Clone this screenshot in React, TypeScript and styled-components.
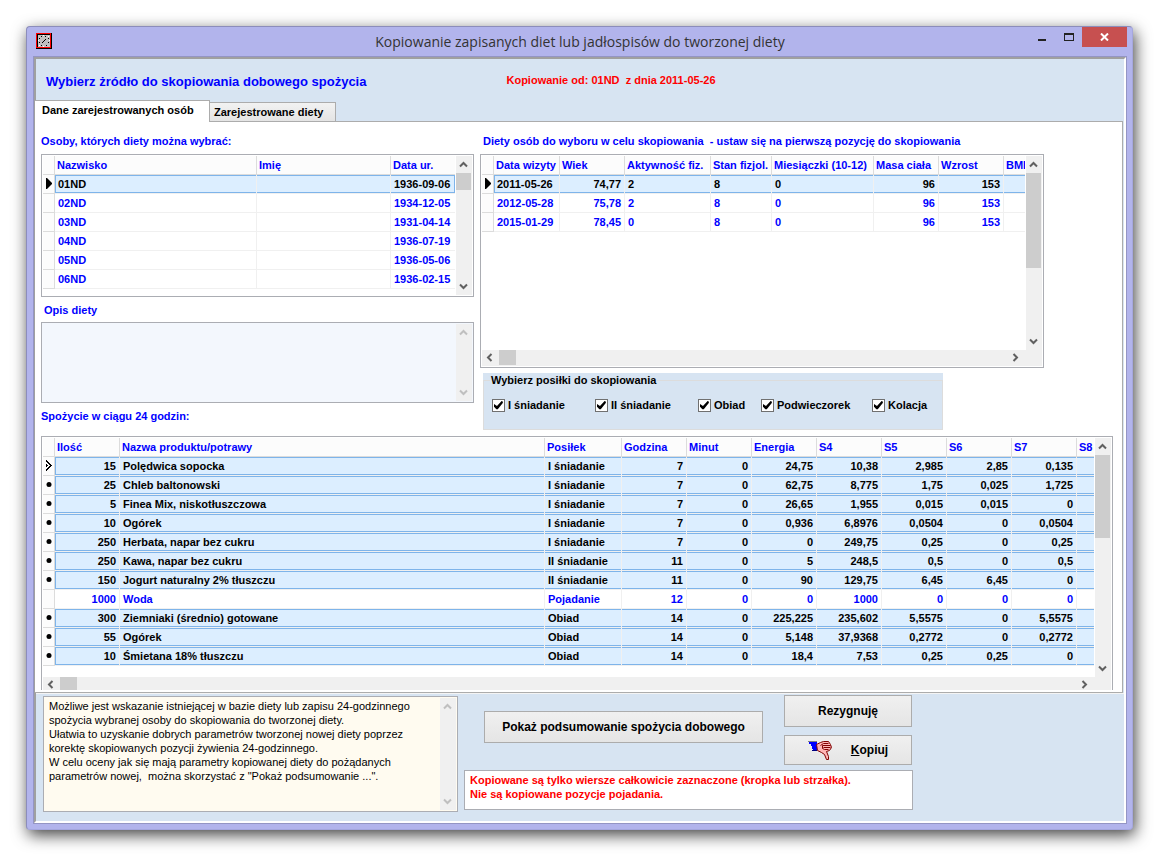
import React from 'react';
import styled, { createGlobalStyle, css } from 'styled-components';

const C = {
  blue: '#0000ff',
  red: '#ff0000',
  panel: '#d7e4f2',
  chrome: '#b2b4ec',
  line: '#acacac',
  box: '#abadb3',
  cellLine: '#f0f0f0',
  headLine: '#dcdcdc',
  sel: '#dceeff',
  selEdge: '#7eb4ea',
};

const Global = createGlobalStyle`
  *, *::before, *::after { box-sizing: border-box; }
  body { margin: 0; background: #fff; }
  body, button, input, textarea, table {
    font-family: "Liberation Sans", Arial, sans-serif;
    font-size: 11px;
    line-height: 14px;
    font-weight: bold;
    color: #000;
  }
`;

const Page = styled.div`
  padding: 26px 27px 27px 26px;
`;

const Dialog = styled.main`
  background: ${C.chrome};
  border: 1px solid #8c8dbb;
  border-right-color: #a5a7de;
  border-bottom-color: #a5a7de;
  border-radius: 4px;
  padding: 0 5px 5px 6px;
  box-shadow: 2px 5px 16px rgba(0, 0, 0, 0.75);
`;

const TitleBar = styled.header`
  display: grid;
  grid-template-columns: 99px 1fr 99px;
  height: 29px;
`;

const TitleIcon = styled.svg`
  display: block;
  margin: 6px 3px;
`;

const Title = styled.h1`
  margin: 0;
  padding-top: 5px;
  text-align: center;
  white-space: nowrap;
  font: 14px/20px "Open Sans", "Segoe UI", sans-serif;
  color: #333;
`;

const Controls = styled.div`
  display: flex;
  justify-content: flex-end;
  align-items: flex-start;
`;

const ControlButton = styled.button<{ $close?: boolean }>`
  flex: none;
  width: ${(p) => (p.$close ? 45 : 27)}px;
  height: 20px;
  padding: 0;
  border: 0;
  background: ${(p) => (p.$close ? '#c75050' : 'transparent')};
  svg { display: block; margin: auto; }
`;

const Client = styled.div`
  border: 1px solid #9495c4;
  background: ${C.panel};
`;

const Inset = styled.div`
  border: 2px solid;
  border-color: #a0a0a0 #fff #fff #a0a0a0;
`;

const Banner = styled.div`
  display: flex;
  align-items: center;
  gap: 140px;
  height: 41px;
  padding: 2px 10px 0;
  white-space: nowrap;
`;

const Heading = styled.h2`
  margin: 0;
  padding-top: 2px;
  font-size: 13px;
  line-height: 20px;
  color: ${C.blue};
`;

const SourceNote = styled.p`
  margin: 0;
  padding-bottom: 2px;
  color: ${C.red};
`;

const TabList = styled.div`
  display: flex;
  align-items: flex-end;
  height: 22px;
  margin: 0 1px 0 -1px;
  box-shadow: inset 0 -1px ${C.line};
`;

const Tab = styled.button<{ $active?: boolean }>`
  border: 1px solid ${C.line};
  text-align: left;
  white-space: nowrap;
  ${(p) =>
    p.$active
      ? css`
          width: 175px;
          height: 22px;
          padding: 0 0 3px 7px;
          background: #fff;
          border-left: 0;
          border-bottom: 0;
        `
      : css`
          width: 127px;
          height: 20px;
          padding: 0 0 0 4px;
          margin-left: -1px;
          background: linear-gradient(#f2f2f2, #e4e4e4);
        `}
`;

const TabPage = styled.section`
  margin: 0 1px 0 -1px;
  padding: 12px 9px 2px 6px;
  background: #fff;
  border-right: 1px solid ${C.line};
  border-bottom: 1px solid ${C.line};
`;

const Upper = styled.div`
  display: flex;
  align-items: flex-start;
  gap: 6px;
`;

const LeftColumn = styled.div`
  flex: 0 0 433px;
  display: grid;
  padding-bottom: 13px;
`;

const RightColumn = styled.div`
  flex: 0 1 564px;
  min-width: 0;
`;

const Caption = styled.h3<{ $inset?: boolean }>`
  margin: 0 0 6px;
  padding-left: ${(p) => (p.$inset ? 3 : 0)}px;
  font-size: 11px;
  line-height: 14px;
  color: ${C.blue};
  white-space: pre;
`;

const FieldCaption = styled.label`
  margin: 6px 0 5px;
  padding-left: 3px;
  color: ${C.blue};
`;

const EndCaption = styled(Caption)`
  margin: 6px 0 0;
`;

const Frame = styled.div<{ $height: number; $open?: boolean }>`
  display: grid;
  grid-template-columns: minmax(0, 1fr) 16px;
  grid-template-rows: minmax(0, 1fr) auto;
  column-gap: 1px;
  height: ${(p) => p.$height}px;
  padding: 1px;
  border: 1px solid ${C.box};
  background: #fff;
  ${(p) => p.$open && 'border-bottom: 0; padding-bottom: 0;'}
`;

const MemoFrame = styled(Frame)<{ $tint: string }>`
  background: ${(p) => p.$tint};
`;

const Clip = styled.div`
  overflow: hidden;
`;

const Bar = styled.div<{ $across?: boolean; $short?: boolean }>`
  display: flex;
  flex-direction: ${(p) => (p.$across ? 'row' : 'column')};
  background: #f0f0f0;
  ${(p) => p.$across && `grid-column: 1 / -1; height: ${p.$short ? 13 : 16}px; padding-right: 17px; overflow: hidden;`}
`;

const BarButton = styled.button<{ $across: boolean }>`
  display: grid;
  place-items: center;
  flex: none;
  width: 15px;
  height: ${(p) => (p.$across ? 15 : 17)}px;
  margin-right: ${(p) => (p.$across ? 2 : 0)}px;
  padding: 0;
  border: 0;
  background: transparent;
`;

const BarTrack = styled.div`
  flex: 1;
`;

const Thumb = styled.div<{ $across?: boolean; $length: number }>`
  background: #cdcdcd;
  width: ${(p) => (p.$across ? p.$length : 15)}px;
  height: ${(p) => (p.$across ? 15 : p.$length)}px;
`;

const Table = styled.table`
  width: 100%;
  table-layout: fixed;
  border-collapse: separate;
  border-spacing: 0;
`;

const HeadCell = styled.th`
  height: 19px;
  padding: 0 0 0 2px;
  overflow: hidden;
  text-align: left;
  white-space: nowrap;
  background: #fcfcfc;
  color: ${C.blue};
  border-right: 1px solid ${C.headLine};
  border-bottom: 1px solid ${C.headLine};
  &:last-child { border-right: 0; }
`;

const MarkCell = styled.td`
  height: 19px;
  padding: 0;
  background: #fcfcfc;
  border-right: 1px solid ${C.headLine};
  border-bottom: 1px solid ${C.headLine};
  svg { display: block; }
`;

const Cell = styled.td<{ $right?: boolean; $selected?: boolean; $first?: boolean; $closed?: boolean }>`
  height: 19px;
  padding: 0 3px;
  overflow: hidden;
  white-space: nowrap;
  text-align: ${(p) => (p.$right ? 'right' : 'left')};
  color: ${(p) => (p.$selected ? '#000' : C.blue)};
  border-right: 1px solid ${C.cellLine};
  border-bottom: 1px solid ${C.cellLine};
  &:last-child { border-right: 0; }
  ${(p) =>
    p.$selected &&
    css`
      background: ${C.sel};
      box-shadow: inset 0 1px ${C.selEdge}, inset 0 -1px ${C.selEdge}${p.$first ? `, inset 1px 0 ${C.selEdge}` : ''}${p.$closed ? `, inset -1px 0 ${C.selEdge}` : ''};
    `}
`;

const Memo = styled.textarea<{ $plain?: boolean }>`
  display: block;
  width: 100%;
  height: 100%;
  margin: 0;
  padding: ${(p) => (p.$plain ? 1 : 2)}px 4px;
  border: 0;
  outline: 0;
  resize: none;
  overflow: hidden;
  white-space: pre;
  background: transparent;
  font-weight: ${(p) => (p.$plain ? 'normal' : 'bold')};
`;

const MealPanel = styled.div`
  width: 460px;
  max-width: 100%;
  margin: 5px 0 0 3px;
  background: ${C.panel};
`;

const MealGroup = styled.fieldset`
  height: 57px;
  margin: 0;
  padding: 11px 8px 0;
  border: 1px solid #dcdcdc;
  legend { padding: 0 1px; margin-left: -2px; }
`;

const MealRow = styled.div`
  display: grid;
  grid-template-columns: 103px 103px 63px 111px auto;
`;

const Check = styled.label`
  display: flex;
  align-items: center;
  gap: 3px;
  white-space: nowrap;
`;

const CheckInput = styled.input`
  appearance: none;
  flex: none;
  width: 13px;
  height: 13px;
  margin: 0;
  border: 1px solid #707070;
  background: #fff;
  &:checked::after {
    content: '';
    display: block;
    width: 9px;
    height: 9px;
    margin: 1px;
    background: #000;
    clip-path: polygon(0 40%, 33% 62%, 90% 0, 100% 24%, 42% 96%, 26% 96%, 0 70%);
  }
`;

const Footer = styled.footer`
  display: flex;
  align-items: flex-start;
  height: 128px;
  padding: 2px 7px 0;
  border-top: 1px solid #f4f4f4;
`;

const InfoBox = styled.div`
  flex: 0 0 415px;
`;

const Actions = styled.div`
  flex: 0 0 449px;
  margin-left: 6px;
`;

const ActionRow = styled.div`
  display: flex;
  justify-content: space-between;
  padding: 0 1px 0 20px;
  margin-top: -1px;
`;

const ActionStack = styled.div`
  display: grid;
  gap: 8px;
`;

const PushButton = styled.button<{ $wide?: boolean; $low?: boolean }>`
  display: flex;
  align-items: center;
  justify-content: center;
  gap: 19px;
  width: ${(p) => (p.$wide ? 279 : 128)}px;
  height: ${(p) => (p.$low ? 30 : 32)}px;
  margin-top: ${(p) => (p.$wide ? 16 : 0)}px;
  padding: 0;
  border: 1px solid ${C.line};
  background: linear-gradient(#f0f0f0, #e5e5e5);
  font-size: 12px;
  white-space: nowrap;
`;

const WarningBox = styled.div`
  height: 40px;
  margin-top: 5px;
  padding: 0 1px;
  border: 1px solid ${C.box};
  background: #fff;
  textarea { color: ${C.red}; }
`;

type Dir = 'up' | 'down' | 'left' | 'right';
const turn: Record<Dir, number> = { up: 0, right: 90, down: 180, left: 270 };
const dirName: Record<Dir, string> = { up: 'W górę', right: 'W prawo', down: 'W dół', left: 'W lewo' };

const Arrow = ({ dir, dim }: { dir: Dir; dim?: boolean }) => (
  <BarButton type="button" $across={dir === 'left' || dir === 'right'} aria-label={dirName[dir]} disabled={dim}>
    <svg width="9" height="9" viewBox="0 0 9 9">
      <path d="M1 6.5 4.5 3 8 6.5" transform={`rotate(${turn[dir]} 4.5 4.5)`} fill="none" stroke={dim ? '#bfbfbf' : '#606060'} strokeWidth="2" />
    </svg>
  </BarButton>
);

const VBar = ({ thumb }: { thumb?: number }) => (
  <Bar>
    <Arrow dir="up" dim={!thumb} />
    <BarTrack>{thumb && <Thumb $length={thumb} />}</BarTrack>
    <Arrow dir="down" dim={!thumb} />
  </Bar>
);

const HBar = ({ short }: { short?: boolean }) => (
  <Bar $across $short={short}>
    <Arrow dir="left" />
    <BarTrack><Thumb $across $length={17} /></BarTrack>
    <Arrow dir="right" />
  </Bar>
);

type Mark = 'current' | 'multi' | 'dot' | 'none';
const MarkIcon = ({ mark }: { mark: Mark }) => (
  <svg width="10" height="12" viewBox="0 0 10 12">
    {mark === 'current' && <path d="M3 0h1l5 5v1l-5 5H3z" />}
    {mark === 'multi' && (
      <path
        d="M3 0h1v1h1v1h1v1h1v1h1v1h1v1H8v1H7v1H6v1H5v1H4v1H3V9h1V8h1V7h1V6h1V5H6V4H5V3H4V2H3zM3 4h1v1h1v1H4v1H3z"
        shapeRendering="crispEdges"
      />
    )}
    {mark === 'dot' && <circle cx="6" cy="5.500" r="2.500" />}
  </svg>
);

interface Column { title: string; width?: number; right?: boolean }
interface Row { mark: Mark; cells: string[] }

const DataGrid = ({ columns, rows, closed }: { columns: Column[]; rows: Row[]; closed?: boolean }) => (
  <Clip>
    <Table>
      <colgroup>
        <col style={{ width: 12 }} />
        {columns.map((c) => <col key={c.title} style={{ width: c.width }} />)}
      </colgroup>
      <thead>
        <tr>
          <HeadCell />
          {columns.map((c) => <HeadCell key={c.title} scope="col">{c.title}</HeadCell>)}
        </tr>
      </thead>
      <tbody>
        {rows.map((r, i) => (
          <tr key={i}>
            <MarkCell><MarkIcon mark={r.mark} /></MarkCell>
            {columns.map((c, j) => (
              <Cell
                key={c.title}
                $right={c.right}
                $selected={r.mark !== 'none'}
                $first={j === 0}
                $closed={closed && j === columns.length - 1}
              >
                {r.cells[j]}
              </Cell>
            ))}
          </tr>
        ))}
      </tbody>
    </Table>
  </Clip>
);

const personColumns: Column[] = [{ title: 'Nazwisko', width: 202 }, { title: 'Imię' }, { title: 'Data ur.', width: 64 }];
const personRows: Row[] = [
  ['01ND', '1936-09-06'], ['02ND', '1934-12-05'], ['03ND', '1931-04-14'],
  ['04ND', '1936-07-19'], ['05ND', '1936-05-06'], ['06ND', '1936-02-15'],
].map(([name, born], i) => ({ mark: i ? 'none' : 'current', cells: [name, '', born] }));

const visitColumns: Column[] = [
  { title: 'Data wizyty', width: 66 },
  { title: 'Wiek', width: 65, right: true },
  { title: 'Aktywność fiz.', width: 86 },
  { title: 'Stan fizjol.', width: 61 },
  { title: 'Miesiączki (10-12)', width: 102 },
  { title: 'Masa ciała', width: 65, right: true },
  { title: 'Wzrost', width: 65, right: true },
  { title: 'BMI' },
];
const visitRows: Row[] = [
  { mark: 'current', cells: ['2011-05-26', '74,77', '2', '8', '0', '96', '153', ''] },
  { mark: 'none', cells: ['2012-05-28', '75,78', '2', '8', '0', '96', '153', ''] },
  { mark: 'none', cells: ['2015-01-29', '78,45', '0', '8', '0', '96', '153', ''] },
];

const foodColumns: Column[] = [
  { title: 'Ilość', width: 65, right: true },
  { title: 'Nazwa produktu/potrawy' },
  { title: 'Posiłek', width: 77 },
  ...['Godzina', 'Minut', 'Energia', 'S4', 'S5', 'S6', 'S7'].map((title) => ({ title, width: 65, right: true })),
  { title: 'S8', width: 17 },
];
const foodRows: Row[] = [
  '15|Polędwica sopocka|I śniadanie|7|0|24,75|10,38|2,985|2,85|0,135',
  '25|Chleb baltonowski|I śniadanie|7|0|62,75|8,775|1,75|0,025|1,725',
  '5|Finea Mix, niskotłuszczowa|I śniadanie|7|0|26,65|1,955|0,015|0,015|0',
  '10|Ogórek|I śniadanie|7|0|0,936|6,8976|0,0504|0|0,0504',
  '250|Herbata, napar bez cukru|I śniadanie|7|0|0|249,75|0,25|0|0,25',
  '250|Kawa, napar bez cukru|II śniadanie|11|0|5|248,5|0,5|0|0,5',
  '150|Jogurt naturalny 2% tłuszczu|II śniadanie|11|0|90|129,75|6,45|6,45|0',
  '1000|Woda|Pojadanie|12|0|0|1000|0|0|0',
  '300|Ziemniaki (średnio) gotowane|Obiad|14|0|225,225|235,602|5,5575|0|5,5575',
  '55|Ogórek|Obiad|14|0|5,148|37,9368|0,2772|0|0,2772',
  '10|Śmietana 18% tłuszczu|Obiad|14|0|18,4|7,53|0,25|0,25|0',
].map((line, i) => ({ mark: i === 0 ? 'multi' : i === 7 ? 'none' : 'dot', cells: [...line.split('|'), ''] }));

const meals = ['I śniadanie', 'II śniadanie', 'Obiad', 'Podwieczorek', 'Kolacja'];

const infoText = `Możliwe jest wskazanie istniejącej w bazie diety lub zapisu 24-godzinnego
spożycia wybranej osoby do skopiowania do tworzonej diety.
Ułatwia to uzyskanie dobrych parametrów tworzonej nowej diety poprzez
korektę skopiowanych pozycji żywienia 24-godzinnego.
W celu oceny jak się mają parametry kopiowanej diety do pożądanych
parametrów nowej,  można skorzystać z "Pokaż podsumowanie ...".`;

const warningText = `Kopiowane są tylko wiersze całkowicie zaznaczone (kropka lub strzałka).
Nie są kopiowane pozycje pojadania.`;

const AppIcon = () => (
  <TitleIcon width="16" height="16" viewBox="0 0 16 16" shapeRendering="crispEdges" aria-hidden="true">
    <rect width="16" height="16" fill="#000" />
    <rect width="15" height="15" fill="#f00" />
    <rect x="1" y="1" width="13" height="13" fill="#000" />
    <rect x="2" y="2" width="12" height="12" fill="#c0c0c0" />
    <path d="M5 3h1v1H5zM9 3h1v1H9zM12 5h1v1h-1zM12 9h1v1h-1zM10 12h1v1h-1zM5 12h1v1H5zM3 5h1v1H3zM3 9h1v1H3zM9 6h1v1H9zM8 7h1v1H8zM7 8h1v1H7zM6 9h1v1H6z" fill="#000" />
    <path d="M7 2h1v1H7zM7 13h1v1H7zM2 7h1v1H2zM13 7h1v1h-1zM12 3h1v1h-1zM3 12h1v1H3z" fill="#fff" />
  </TitleIcon>
);

const HandIcon = () => (
  <svg width="24" height="19" viewBox="0 0 24 19" aria-hidden="true">
    <g shapeRendering="crispEdges">
      <path d="M0 0h9v1H0z" fill="#808080" />
      <path d="M1 1h8v9H5V8H4V5H3V3H1z" fill="#00f" />
      <path d="M4 9h5v1H4z" fill="#000080" />
    </g>
    <path
      d="M8.500 3.500 12.500 1.500 15.500.5H20.500L22.500 3.500 23.500 6.500 21.500 9.500 18.500 10.500 20.500 15.500 20.500 18.500H18.500L16.500 13.500 13.500 11.500 9.500 9.500z"
      fill="#ffb6b6"
      stroke="#800000"
    />
    <path d="M12.500 4.500 15.500 2.500H20.500M14.500 4.500H22.500M15.500 6.500H22.500M16.500 8.500H20.500M14.500 4.500V7.500L16.500 8.500" fill="none" stroke="#800000" />
  </svg>
);

export default function App() {
  return (
    <>
      <Global />
      <Page>
        <Dialog>
          <TitleBar>
            <AppIcon />
            <Title>Kopiowanie zapisanych diet lub jadłospisów do tworzonej diety</Title>
            <Controls>
              <ControlButton type="button" aria-label="Minimalizuj">
                <svg width="8" height="9" viewBox="0 0 8 9"><path d="M0 6h8v2H0z" fill="#222" /></svg>
              </ControlButton>
              <ControlButton type="button" aria-label="Maksymalizuj">
                <svg width="10" height="9" viewBox="0 0 10 9"><path d="M0 0h10v8H0zM1 2v5h8V2z" fill="#222" fillRule="evenodd" /></svg>
              </ControlButton>
              <ControlButton type="button" $close aria-label="Zamknij">
                <svg width="9" height="8" viewBox="0 0 9 8"><path d="M1 .5 8 7.500M8 .5 1 7.500" stroke="#fff" strokeWidth="2" /></svg>
              </ControlButton>
            </Controls>
          </TitleBar>
          <Client>
            <Inset>
              <Banner>
                <Heading>Wybierz żródło do skopiowania dobowego spożycia</Heading>
                <SourceNote>Kopiowanie od: 01ND&nbsp; z dnia 2011-05-26</SourceNote>
              </Banner>
              <TabList role="tablist">
                <Tab type="button" role="tab" aria-selected $active>Dane zarejestrowanych osób</Tab>
                <Tab type="button" role="tab" aria-selected={false}>Zarejestrowane diety</Tab>
              </TabList>
              <TabPage role="tabpanel">
                <Upper>
                  <LeftColumn>
                    <Caption>Osoby, których diety można wybrać:</Caption>
                    <Frame $height={143}>
                      <DataGrid columns={personColumns} rows={personRows} closed />
                      <VBar thumb={17} />
                    </Frame>
                    <FieldCaption htmlFor="opis">Opis diety</FieldCaption>
                    <MemoFrame $height={81} $tint="#f3f7fd">
                      <Memo id="opis" />
                      <VBar />
                    </MemoFrame>
                    <EndCaption>Spożycie w ciągu 24 godzin:</EndCaption>
                  </LeftColumn>
                  <RightColumn>
                    <Caption $inset>{'Diety osób do wyboru w celu skopiowania  - ustaw się na pierwszą pozycję do skopiowania'}</Caption>
                    <Frame $height={214}>
                      <DataGrid columns={visitColumns} rows={visitRows} />
                      <VBar thumb={95} />
                      <HBar />
                    </Frame>
                    <MealPanel>
                      <MealGroup>
                        <legend>Wybierz posiłki do skopiowania</legend>
                        <MealRow>
                          {meals.map((m) => (
                            <Check key={m}><CheckInput type="checkbox" defaultChecked />{m}</Check>
                          ))}
                        </MealRow>
                      </MealGroup>
                    </MealPanel>
                  </RightColumn>
                </Upper>
                <Frame $height={254} $open>
                  <DataGrid columns={foodColumns} rows={foodRows} />
                  <VBar thumb={83} />
                  <HBar short />
                </Frame>
              </TabPage>
              <Footer>
                <InfoBox>
                  <MemoFrame $height={116} $tint="#fffbf0">
                    <Memo $plain readOnly aria-label="Informacja" defaultValue={infoText} />
                    <VBar />
                  </MemoFrame>
                </InfoBox>
                <Actions>
                  <ActionRow>
                    <PushButton type="button" $wide>Pokaż podsumowanie spożycia dobowego</PushButton>
                    <ActionStack>
                      <PushButton type="button">Rezygnuję</PushButton>
                      <PushButton type="button" $low><HandIcon /><span><u>K</u>opiuj</span></PushButton>
                    </ActionStack>
                  </ActionRow>
                  <WarningBox>
                    <Memo readOnly aria-label="Uwaga" defaultValue={warningText} />
                  </WarningBox>
                </Actions>
              </Footer>
            </Inset>
          </Client>
        </Dialog>
      </Page>
    </>
  );
}
